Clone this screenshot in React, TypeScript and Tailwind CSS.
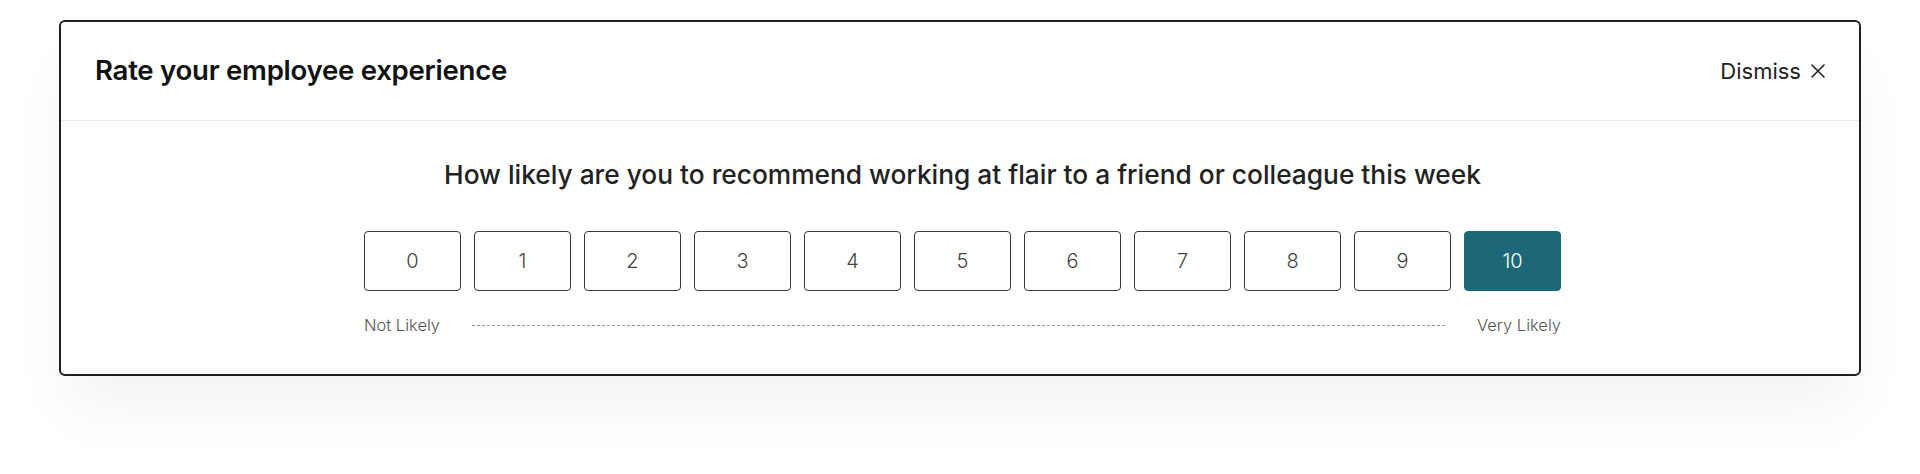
import React, { useState } from 'react';

const scores = [0, 1, 2, 3, 4, 5, 6, 7, 8, 9, 10];

function CloseIcon() {
  return (
    <svg width="18" height="18" viewBox="0 0 18 18" fill="none" stroke="currentColor" strokeWidth="1.6" strokeLinecap="round">
      <path d="M3 3L15 15M15 3L3 15" />
    </svg>
  );
}

export default function App() {
  const [selected, setSelected] = useState<number>(10);

  return (
    <div className="min-h-screen bg-white px-[59px] pt-5 font-['Inter',sans-serif]">
      <div className="rounded-md border-2 border-[#1f1f1f] bg-white shadow-[0_40px_60px_-10px_rgba(0,0,0,0.05)]">
        <header className="flex h-[99px] items-center justify-between border-b border-[#ece8e4] pl-[34px] pr-8">
          <h1 className="text-[27.6px] font-semibold text-[#111111] tracking-[-0.01em]">
            Rate your employee experience
          </h1>
          <button className="flex items-center gap-2 text-[22px] text-[#222222]">
            Dismiss
            <CloseIcon />
          </button>
        </header>

        <div className="flex flex-col items-center pb-[37px] pl-[5px] pt-[38px]">
          <p className="text-[26.3px] font-medium leading-8 text-[#222222]">
            How likely are you to recommend working at flair to a friend or colleague this week
          </p>

          <div className="mt-10 flex gap-[13px]">
            {scores.map((s) => (
              <button
                key={s}
                onClick={() => setSelected(s)}
                className={
                  s === selected
                    ? 'flex h-[60px] w-[97px] items-center justify-center rounded-[4px] border border-[#1c6878] bg-[#1c6878] text-[20px] font-light text-white'
                    : 'flex h-[60px] w-[97px] items-center justify-center rounded-[4px] border border-[#3a3a3a] bg-white text-[20px] font-light text-[#444444]'
                }
              >
                {s}
              </button>
            ))}
          </div>

          <div className="mt-[22px] flex w-[1197px] items-center">
            <span className="text-[16.5px] font-light leading-6 text-[#555555]">Not Likely</span>
            <div className="mx-8 flex-1 border-t border-dashed border-[#9a9a9a]" />
            <span className="text-[16.5px] font-light leading-6 text-[#555555]">Very Likely</span>
          </div>
        </div>
      </div>
    </div>
  );
}
